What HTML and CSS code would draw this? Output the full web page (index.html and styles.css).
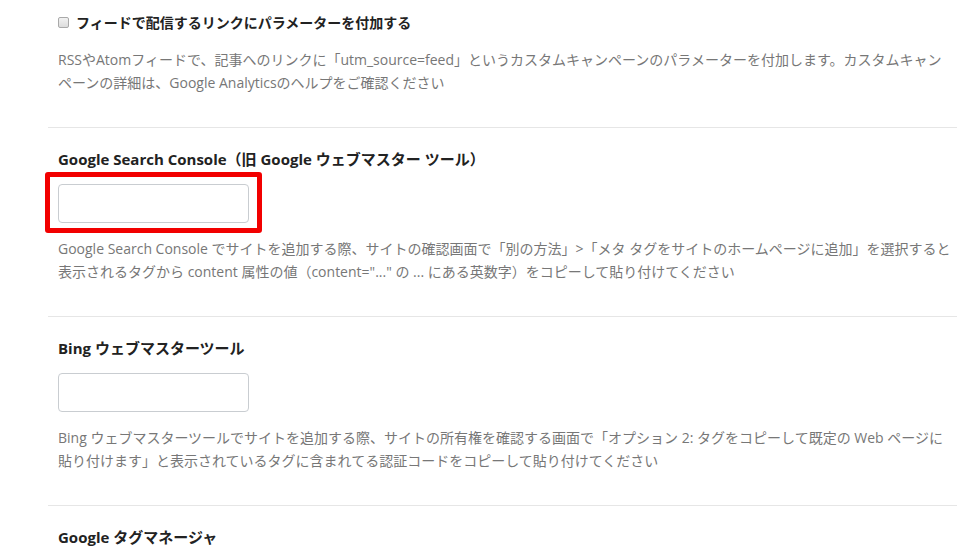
FILE: index.html
```html
<!DOCTYPE html>
<html lang="ja">
<head>
<meta charset="utf-8">
<title>設定</title>
<link rel="stylesheet" href="styles.css">
</head>
<body>
<div class="page">
  <div class="block block-first">
    <label class="check-label"><span class="checkbox"></span>フィードで配信するリンクにパラメーターを付加する</label>
    <p class="desc">RSSやAtomフィードで、記事へのリンクに「utm_source=feed」というカスタムキャンペーンのパラメーターを付加します。カスタムキャン<br>ペーンの詳細は、Google Analyticsのヘルプをご確認ください</p>
  </div>
  <div class="block">
    <h3 class="heading">Google Search Console（旧 Google ウェブマスター ツール）</h3>
    <div class="field">
      <input class="text-input" type="text">
      <span class="highlight"></span>
    </div>
    <p class="desc">Google Search Console でサイトを追加する際、サイトの確認画面で「別の方法」&gt;「メタ タグをサイトのホームページに追加」を選択すると<br>表示されるタグから content 属性の値（content="..." の ... にある英数字）をコピーして貼り付けてください</p>
  </div>
  <div class="block">
    <h3 class="heading">Bing ウェブマスターツール</h3>
    <div class="field">
      <input class="text-input" type="text">
    </div>
    <p class="desc">Bing ウェブマスターツールでサイトを追加する際、サイトの所有権を確認する画面で「オプション 2: タグをコピーして既定の Web ページに<br>貼り付けます」と表示されているタグに含まれてる認証コードをコピーして貼り付けてください</p>
  </div>
  <div class="block block-last">
    <h3 class="heading">Google タグマネージャ</h3>
  </div>
</div>
</body>
</html>
```

FILE: styles.css
```css
html, body {
  margin: 0;
  padding: 0;
  background: #ffffff;
}

body {
  font-family: "Open Sans", "Noto Sans CJK JP", sans-serif;
  color: #333333;
  overflow: hidden;
}

.page {
  width: 909px;
  margin-left: 48px;
}

.block {
  padding: 20px 10px 33px;
  border-top: 1px solid #e6e6e6;
}

.block-first {
  border-top: none;
  padding-top: 11px;
}

.block-last {
  padding-bottom: 0;
}

.check-label {
  display: flex;
  align-items: center;
  font-size: 14px;
  font-weight: bold;
  line-height: 23px;
  color: #222222;
  margin-bottom: 14px;
}

.checkbox {
  width: 9px;
  height: 9px;
  border: 1px solid #a9a9a9;
  border-radius: 2px;
  background: linear-gradient(#f2f2f2, #dcdcdc);
  margin-right: 7px;
  flex: none;
}

.heading {
  margin: 0 0 13px;
  font-size: 15px;
  font-weight: bold;
  line-height: 23px;
  color: #222222;
}

.field {
  position: relative;
  width: 191px;
  height: 39px;
  margin-bottom: 14px;
}

.text-input {
  box-sizing: border-box;
  display: block;
  width: 191px;
  height: 39px;
  margin: 0;
  border: 1px solid #c9cdd1;
  border-radius: 4px;
  background: #ffffff;
}

.highlight {
  position: absolute;
  left: -13px;
  top: -12px;
  width: 217px;
  height: 61px;
  box-sizing: border-box;
  border: 5px solid #f20000;
  border-radius: 3px;
}

.desc {
  margin: 0;
  font-size: 14px;
  line-height: 23px;
  color: #777777;
  white-space: nowrap;
}
```
